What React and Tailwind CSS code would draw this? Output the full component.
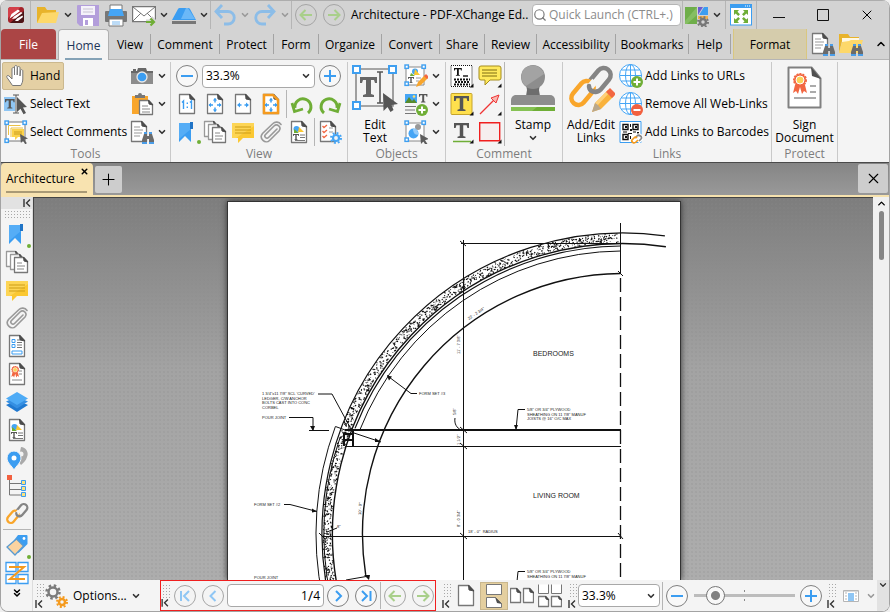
import React from 'react'
import { useState } from 'react'
import { ChevronDown, ChevronUp, ChevronsDown, X, Plus, Search } from 'lucide-react'

const Icon = ({ size = 24, box = 24, children }) => (
	<svg width={size} height={size} viewBox={`0 0 ${box} ${box}`} fill="none" className="shrink-0" aria-hidden="true">
		{children}
	</svg>
)

const Sheet = ({ x = 4, y = 2, w = 16, h = 20, fill = '#fff', stroke = '#777', fold = 5 }) => (
	<g>
		<path d={`M${x + 0.5} ${y + 0.5}h${w - fold - 1}l${fold} ${fold}v${h - fold - 1}h${-(w - 1)}z`} fill={fill} stroke={stroke} strokeWidth="1.3" strokeLinejoin="round" />
		<path d={`M${x + w - fold - 0.5} ${y}l${fold + 0.5} ${fold + 1}l${-fold} -1z`} fill="#4d4d4d" stroke="#4d4d4d" />
	</g>
)

const Binoculars = ({ x = 12, y = 12 }) => (
	<g transform={`translate(${x} ${y})`}>
		<path d="M2 2h3v2h2V2h3l2 6v3H7V7H5v4H0V8z" fill="#6b6b6b" />
		<path d="M2 0h3v2H2zM7 0h3v2H7zM0 10h5v2H0zM7 10h5v2H7z" fill="#4a9de8" />
	</g>
)

const Handles = ({ s = 20, o = 2 }) => (
	<g fill="#fff" stroke="#3f9ff0" strokeWidth="1.4">
		<rect x={o - 1} y={o - 1} width="3.4" height="3.4" />
		<rect x={o + s - 3} y={o - 1} width="3.4" height="3.4" />
		<rect x={o - 1} y={o + s - 3} width="3.4" height="3.4" />
	</g>
)

const Cursor = ({ x = 14, y = 13, k = 1 }) => (
	<path transform={`translate(${x} ${y}) scale(${k})`} d="M0 0l9 5-4 1.2 2.6 4-1.8 1.2L3.400 7.400 1 10z" fill="#5c5c5c" />
)

const Corner = () => <path d="M23.500 19.500v4h-4z" fill="#111" />

const SerifT = ({ x, y, k = 1, fill = '#555' }) => (
	<path transform={`translate(${x} ${y}) scale(${k})`} d="M0 0h12v4h-1.300l-.6-2.200H7.400v8.600l1.800.6v1H2.800v-1l1.800-.6V1.800H1.900L1.300 4H0z" fill={fill} />
)

/* ---- title bar ---- */
const AppLogo = () => (
	<Icon size={18} box={18}>
		<rect x="1" y="1" width="16" height="16" rx="3" fill="#a3232a" />
		<path d="M1 4a3 3 0 013-3h10L1 12z" fill="#d3404a" />
		<path d="M17 5v9a3 3 0 01-3 3H3z" fill="#4b1517" />
		<path d="M2.500 12.500L4.500 8 11 3.500l2 1.500-6.500 5zM5 13l2-2.500L14 6l1.500 1-7 5.500zM8 15l2-2.500 5.500-3 .5 1.500-5 4z" fill="#fff" />
	</Icon>
)
const Folder = () => (
	<Icon>
		<path d="M1 4h8l2 3h9v13H1z" fill="#e8b32b" />
		<path d="M6 10l17-1-3 11H1z" fill="#fdd86a" />
	</Icon>
)
const Save = () => (
	<Icon>
		<path d="M1 3a1 1 0 011-1h21v21H4l-3-3z" fill="#b39edb" />
		<path d="M5 3h14v9H5z" fill="#f5f2fa" />
		<path d="M7 6h10M7 9h10" stroke="#c8c3d2" />
		<path d="M7 15h10v8H7z" fill="#fff" />
		<path d="M9 17h3v5H9z" fill="#b39edb" />
	</Icon>
)
const Print = () => (
	<Icon>
		<path d="M6 2h12v8H6z" fill="#fff" stroke="#777" />
		<rect x="1" y="8" width="22" height="11" rx="1" fill="#777" />
		<path d="M4 13l2-7h12l2 7z" fill="#45a5f5" />
		<path d="M5 16h14v7H5z" fill="#fff" stroke="#777" />
		<path d="M8 19h8M8 21h8" stroke="#7ab8ee" />
	</Icon>
)
const Mail = () => (
	<Icon>
		<path d="M.600 3.600h22.800v15H.600z" fill="#fff" stroke="#777" strokeWidth="1.200" />
		<path d="M1 4l11 9L23 4M1 18l8-8M23 18l-8-8" stroke="#777" />
		<path d="M14 19h8M18.500 15l4 4-4 4" stroke="#d4d4d4" strokeWidth="5" />
		<path d="M14 19h8M18.500 15.500l3.500 3.500-3.500 3.500" stroke="#6fae36" strokeWidth="2.200" />
	</Icon>
)
const Scanner = () => (
	<Icon>
		<path d="M6 6a2 2 0 012-1h8a2 2 0 012 1l6 11H0z" fill="#3b9df1" />
		<path d="M14 5h2l7 11H9z" fill="#6bb8f8" />
		<path d="M0 18h24v3H0z" fill="#777" />
	</Icon>
)
const Undo = ({ flip }) => (
	<Icon>
		<g transform={flip ? 'translate(24 0) scale(-1 1)' : undefined} stroke="#8cbde8" strokeWidth="2.800">
			<path d="M4 8.500h11a5.500 5.500 0 010 12.500h-4" />
			<path d="M9 2L3 8.500 9 15" />
		</g>
	</Icon>
)
const UiOptions = () => (
	<Icon>
		<path d="M0 4h12v17H0z" fill="#6fae4a" />
		<path d="M0 18L12 4v8L2 21H0z" fill="#85be62" />
		<path d="M13 4h5l-5 8z" fill="#6d5bd0" />
		<path d="M19 4h4v8h-9z" fill="#3b9df1" />
		<path d="M13 13h10v3H13z" fill="#f2b04a" />
		<circle cx="18" cy="19" r="3" fill="#d3d3d3" stroke="#777" strokeWidth="2.500" />
		<circle cx="18" cy="19" r="5" stroke="#777" strokeWidth="2" strokeDasharray="1.900 2.020" />
	</Icon>
)
const FullScreen = () => (
	<Icon>
		<rect x="1.500" y="1.500" width="21" height="20.500" fill="#fff" stroke="#3b9df1" />
		<path d="M1 1h22v4H1z" fill="#3b9df1" />
		<path d="M16 3h1M18 3h1M20 3h1" stroke="#fff" />
		<path d="M5 7h5L8.500 8.700l2.500 2.500L9.200 13 6.700 10.500 5 12zM19 7h-5l1.500 1.700-2.500 2.500 1.800 1.800 2.500-2.500L19 12zM5 20h5l-1.500-1.700 2.500-2.500L9.200 14l-2.500 2.500L5 15zM19 20h-5l1.500-1.700-2.500-2.500 1.800-1.800 2.500 2.500L19 15z" fill="#6fae36" />
	</Icon>
)

/* ---- ribbon ---- */
const Hand = () => (
	<Icon>
		<path d="M8.500 21.500L3 13.500c-1-2 1-2.500 2-1.500l3 3V5c0-2 2.500-2 2.500 0v6V3c0-2 2.700-2 2.700 0v8l.3-7c0-2 2.500-2 2.500 0v8l.5-5c0-2 2.300-1.700 2.300 0v8c0 3-1 4.500-2 6.500z" fill="#fff" stroke="#777" />
	</Icon>
)
const SelectText = () => (
	<Icon>
		<path d="M0 5h11v14H0z" fill="#8fc6f4" />
		<SerifT x={1} y={7} k={0.8} />
		<path d="M9 3h6M12 3v18M9 21h6" stroke="#555" />
		<path d="M13 5l10 10-4 .5 3 5.500-2.500 1.300-3-5.500L13 20z" fill="#555" />
	</Icon>
)
const SelectComments = () => (
	<Icon>
		<path d="M2 2h19v19H2z" fill="#fff" stroke="#777" />
		<path d="M4.500 15V5.500h12M7 17V8h12" stroke="#ecc146" />
		<path d="M8 9h12v8h-6l-3 3v-3H8z" fill="#fcd34c" />
		<path d="M10 12h8M10 14h8" stroke="#c99d1f" />
		<Handles s={20} o={2} />
		<Cursor x={16} y={14} k={0.900} />
	</Icon>
)
const Camera = () => (
	<Icon>
		<path d="M1 7h22v13H1z" fill="#8c8c8c" />
		<path d="M1 7h22v2H1zM8 4h8l1 3H7zM3 5h3v2H3z" fill="#686868" />
		<circle cx="12" cy="13" r="5" fill="#3b9df1" stroke="#e8e8e8" strokeWidth="1.300" />
	</Icon>
)
const Paste = () => (
	<Icon>
		<path d="M2 4h16v18H2z" fill="#f9a62b" />
		<path d="M5 6V3h3a2 2 0 014 0h3v3z" fill="#777" />
		<g transform="translate(9 8)"><Sheet x={0} y={0} w={14} h={15} fold={4} /><path d="M3 6h6M3 9h8M3 12h8" stroke="#888" /></g>
	</Icon>
)
const DocFind = () => (
	<Icon>
		<Sheet x={1} y={1} w={16} h={21} />
		<path d="M4 7h6M4 10h9M4 13h8M4 16h6" stroke="#999" />
		<Binoculars x={12} y={12} />
	</Icon>
)
const FolderFind = () => (
	<Icon>
		<path d="M0 2h9l2 3h9v4H0z" fill="#e8b32b" />
		<path d="M0 9h3L0 21z" fill="#e8b32b" />
		<path d="M3 6h17v4H3z" fill="#fff8e2" />
		<path d="M3 10l7-1 2-1h12l-4 13H0z" fill="#fdd86a" />
		<Binoculars x={12} y={12} />
	</Icon>
)
const OneToOne = () => (
	<Icon>
		<Sheet />
		<path d="M7 10.500L8.500 9v8M15 10.500L16.500 9v8M12.300 10.500v1.500M12.300 14.500v1.500" stroke="#3b9df1" strokeWidth="1.400" />
	</Icon>
)
const FitPage = ({ active }) => (
	<Icon>
		<Sheet />
		{active && <path d="M5 3h9l5 5v13H5z" stroke="#f49a1e" strokeWidth="2.500" />}
		<path d="M12 6.500v4M12 15.500v4M6 13h4M14 13h4" stroke="#3b9df1" strokeWidth="1.500" />
		<path d="M9.800 8.500L12 6l2.200 2.500zM9.800 17.500L12 20l2.200-2.500zM8 10.800L5.500 13 8 15.200zM16 10.800l2.500 2.200-2.500 2.200z" fill="#3b9df1" />
	</Icon>
)
const FitWidth = () => (
	<Icon>
		<Sheet />
		<path d="M7 13h3.500M13.500 13H17" stroke="#3b9df1" strokeWidth="1.500" />
		<path d="M9 10.500L6 13l3 2.500zM15 10.500l3 2.500-3 2.500z" fill="#3b9df1" />
	</Icon>
)
const Rotate = ({ flip }) => (
	<Icon>
		<g transform={flip ? 'translate(24 0) scale(-1 1)' : undefined}>
			<path d="M5 16a8 8 0 1113 5" stroke="#6fae36" strokeWidth="3" />
			<path d="M2 11l2.500 8.500L13 17" stroke="#6fae36" strokeWidth="2.800" />
		</g>
	</Icon>
)
const Bookmark = () => (
	<Icon>
		<path d="M4 3h12v19l-6-6-6 6z" fill="#3b9df1" />
		<path d="M4 3h12v6L4 19z" fill="#55adf6" />
		<path d="M15 2h3v7h-3z" fill="#2074c6" />
	</Icon>
)
const Pages = () => (
	<Icon>
		<Sheet x={1} y={1} w={13} h={16} stroke="#999" fold={3} />
		<Sheet x={5} y={4} w={13} h={16} stroke="#999" fold={3} />
		<Sheet x={9} y={7} w={14} h={16} fold={4} />
		<path d="M12 13h5M12 16h8M12 19h7" stroke="#888" />
	</Icon>
)
const Comment = () => (
	<Icon>
		<path d="M1 3h22v15H12l-5 5v-5H1z" fill="#fbc832" />
		<path d="M1 3h22v3L5 18H1z" fill="#fdd555" />
		<path d="M4 7h16M4 10h16M4 13h16" stroke="#cd9d17" />
	</Icon>
)
const Clip = () => (
	<Icon>
		<path d="M18 9l-8.500 8.500c-2 2-5-1-3-3L15 6c3-3 8 1 5 5l-9.500 9.500c-4 4-11-2-7-7L14 3.500c2-2 6-2 8 1" stroke="#999" strokeWidth="1.600" strokeLinecap="round" />
	</Icon>
)
const Content = () => (
	<Icon>
		<Sheet y={1} h={22} />
		<circle cx="9.500" cy="9" r="3" fill="#45a5f5" />
		<path d="M12 7l5 5h-6z" fill="#fbc832" /><path d="M7 9l5 4H7z" fill="#6fae36" />
		<SerifT x={6} y={14} k={0.500} />
		<path d="M13 15h5M13 17.500h5M8 20.500h10" stroke="#777" />
	</Icon>
)
const PageOptions = () => (
	<Icon>
		<Sheet x={2} y={1} w={16} h={21} />
		<path d="M4.500 6l1.500 1.500L9 5M4.500 11L6 12.500 9 10M4.500 16L6 17.500 9 15" stroke="#f26742" strokeWidth="1.300" />
		<path d="M11 8h4M11 12h4" stroke="#999" />
		<circle cx="18" cy="18" r="3" fill="#f4f4f4" stroke="#45a5f5" strokeWidth="2.200" />
		<circle cx="18" cy="18" r="5" stroke="#45a5f5" strokeWidth="2" strokeDasharray="1.900 2.020" />
	</Icon>
)
const EditText = () => (
	<Icon size={48} box={48}>
		<path d="M5 5h37v37H5z" stroke="#8a8a8a" strokeWidth="1.600" />
		<g fill="#fff" stroke="#3f9ff0" strokeWidth="2"><path d="M2 2h7v7H2zM38 2h7v7h-7zM2 38h7v7H2z" /></g>
		<path d="M9 13h17v6h-2l-1-3h-3v14l3 1v2H12v-2l3-1V16h-3l-1 3H9z" fill="#666" />
		<path d="M26 8h6M29 8v31M26 39h6" stroke="#555" strokeWidth="1.600" />
		<path d="M32 29l15 11-6.500 1 2 5-3 2-3-5-4 4z" fill="#555" />
	</Icon>
)
const EditContent = () => (
	<Icon>
		<path d="M2 3h18v18H2z" fill="#fff" stroke="#888" />
		<circle cx="11" cy="7.500" r="3" fill="#45a5f5" /><path d="M11 5l5 6h-6z" fill="#fbc832" /><path d="M7 9l4 3H6z" fill="#6fae36" />
		<SerifT x={4} y={13} k={0.500} /><path d="M12 14h5M12 17h3" stroke="#999" />
		<Handles s={19} o={2} />
		<path d="M12 23l2-5 7-7 3 3-7 7z" fill="#f8a52c" /><path d="M20 12l2-2 3 3-2 2z" fill="#f26742" />
	</Icon>
)
const AddContent = () => (
	<Icon>
		<path d="M1 2h12v9H1z" fill="#45a5f5" /><path d="M1 11l4-6 3 4 2-2 3 4z" fill="#568b2c" /><circle cx="10" cy="4.500" r="1.300" fill="#ffe06b" />
		<SerifT x={15} y={2} k={0.700} />
		<path d="M1 14.500h11M1 18h10M1 21.500h11" stroke="#777" />
		<circle cx="18" cy="18" r="6" fill="#6fae36" />
		<path d="M18 14.500v7M14.500 18h7" stroke="#fff" strokeWidth="2" />
	</Icon>
)
const EditShapes = () => (
	<Icon>
		<path d="M2 3h18v18H2z" fill="#fff" stroke="#888" />
		<circle cx="14" cy="7" r="3" fill="#999" />
		<circle cx="9.500" cy="13.500" r="5" fill="#45a5f5" /><path d="M9 8.500a5 5 0 015 6c-3 1-5-2-5-6z" fill="#94cbfa" />
		<Handles s={19} o={2} />
		<Cursor x={16} y={14} />
	</Icon>
)
const Typewriter = () => (
	<Icon>
		<path d="M1 1.500h21v21H1z" fill="#fff" stroke="#111" strokeDasharray="1 1" />
		<SerifT x={4} y={4} k={0.650} fill="#111" />
		<path d="M13 12h5" stroke="#111" strokeWidth="1.400" />
		<path d="M4 15.500h16M5 18h14M4 20.500h16" stroke="#111" strokeWidth="1.800" strokeDasharray="2 1" />
		<Corner />
	</Icon>
)
const Sticky = () => (
	<Icon>
		<path d="M3 2h18a2 2 0 012 2v10a2 2 0 01-2 2H12l-5 5v-5H3a2 2 0 01-2-2V4a2 2 0 012-2z" fill="#ffe95c" stroke="#a58d1e" />
		<path d="M4 6h15M4 9h15M4 12h15" stroke="#7f6d13" />
		<Corner />
	</Icon>
)
const Highlight = () => (
	<Icon>
		<rect x="1" y="1.500" width="21" height="21" rx="1" fill="#ffe04d" stroke="#c5a42c" />
		<SerifT x={4} y={4} k={1.250} />
		<Corner />
	</Icon>
)
const Arrow = () => (
	<Icon>
		<path d="M2 22L20 4" stroke="#ef3434" strokeWidth="1.300" />
		<path d="M21 3l-3 8-5-5z" fill="#f8b6b0" stroke="#ef3434" />
		<Corner />
	</Icon>
)
const Underline = () => (
	<Icon>
		<SerifT x={4} y={3} k={1.250} />
		<path d="M3 21.500h18" stroke="#6fae36" strokeWidth="1.500" />
		<Corner />
	</Icon>
)
const Rectangle = () => (
	<Icon>
		<path d="M1.700 2.700h20v18h-20z" fill="#f6eeee" stroke="#f01f1f" strokeWidth="1.400" />
		<Corner />
	</Icon>
)
const Stamp = () => (
	<Icon size={48} box={48}>
		<path d="M17 20h14l-1 6 1 6H17l1-6z" fill="#6d6d6d" />
		<circle cx="24" cy="13" r="12" fill="#8d8d8d" />
		<path d="M15 5a12 12 0 0120 5L17 22a12 12 0 01-2-17z" fill="#a3a3a3" />
		<path d="M2 41v-5a5 5 0 015-5h34a5 5 0 015 5v5z" fill="#8d8d8d" />
		<path d="M2 43h44v4H2z" fill="#6fae36" /><path d="M2 43h26l-5 4H2z" fill="#86c254" />
	</Icon>
)
const ChainShape = () => (
	<g strokeWidth="4.500">
		<rect x="19" y="9" width="27" height="14" rx="7" stroke="#858585" transform="rotate(-50 32.500 16)" />
		<path d="M16 24l7-8" stroke="#f4f4f4" strokeWidth="9" />
		<rect x="2" y="22" width="27" height="14" rx="7" stroke="#f9a62b" transform="rotate(-50 15.500 29)" />
		<path d="M23 23l5-6" stroke="#f4f4f4" strokeWidth="7" />
		<path d="M22 22c0 5 5 7 9 5" stroke="#858585" strokeLinecap="round" />
	</g>
)
const LinkBig = () => (
	<Icon size={48} box={48}>
		<ChainShape />
		<path d="M25 48l3-9 13-13 6 6-13 13z" fill="#f9b23c" />
		<path d="M28 39l13-13 2 2-13 14z" fill="#fdd07a" />
		<path d="M25 48l3-9 3 2 3 4z" fill="#b9a88d" />
		<path d="M39 28l4-4 6 6-4 4z" fill="#f26742" />
	</Icon>
)
const Link = () => <Icon box={47}><ChainShape /></Icon>
const Globe = ({ minus }) => (
	<Icon>
		<g stroke="#45a5f5">
			<circle cx="11.500" cy="11.500" r="11" fill="#fff" />
			<ellipse cx="11.500" cy="11.500" rx="5" ry="11" />
			<path d="M11.500 1v22M1 11.500h22M2.500 6h18M2.500 17h18" />
		</g>
		<circle cx="18" cy="18" r="6" fill={minus ? '#f2603f' : '#6fae36'} />
		<path d={minus ? 'M14.500 18h7' : 'M14.500 18h7M18 14.500v7'} stroke="#fff" strokeWidth="2" />
	</Icon>
)
const Barcode = () => (
	<Icon>
		<path d="M1 1.500h21v21H1z" fill="#fff" stroke="#3b9df1" />
		<path d="M4 4.500h5v5H4zM14 4.500h5v5h-5zM4 14.500h5v5H4z" stroke="#111" strokeWidth="1.400" />
		<path d="M6 6h2v2H6zM16 6h2v2h-2zM6 16h2v2H6zM11 4h1v3h-1zM11 9h2v2h-2zM4 11.500h4v1H4zM14 11.500h3v1h-3zM18 12h2v2h-2zM9 13h4v1H9zM11 16h1v3h-1z" fill="#111" />
		<path d="M14 20l4-4c2-2 6 1 4 3l-3 3" stroke="#fff" strokeWidth="4" />
		<path d="M16 18l2-2c2-2 6 1 4 3l-2 2" stroke="#888" strokeWidth="1.700" />
		<path d="M18 18c-1-1-2-1-3 0l-2 2c-1 2 2 4 4 2l2-2" stroke="#f49a1e" strokeWidth="1.700" />
	</Icon>
)
const Seal = () => (
	<g>
		<path d="M9 21l-2 8 3-2 2 3 2-7 2 7 2-3 3 2-2-8z" fill="#f26742" />
		<circle cx="14" cy="16" r="6" fill="#f26742" stroke="#f26742" strokeWidth="2" strokeDasharray="2 1" />
		<circle cx="14" cy="16" r="4" fill="#fbd25a" stroke="#fff" />
	</g>
)
const Sign = () => (
	<Icon size={48} box={48}>
		<path d="M7.500 3.500h23l9 11v29h-32z" fill="#fff" stroke="#808080" strokeWidth="2" strokeLinejoin="round" />
		<path d="M30 3l10 12-9-3z" fill="#505050" />
		<g transform="translate(5 0)"><Seal /></g>
		<path d="M29 22h6M29 28h6M13 34h22" stroke="#909090" strokeWidth="1.500" />
	</Icon>
)

/* ---- side bar ---- */
const Fields = () => (
	<Icon>
		<Sheet y={1} h={22} />
		<path d="M7 5.500h3v3H7zM7 10.500h3v3H7zM7 17h10v3H7z" stroke="#3b9df1" />
		<path d="M12 6h3M12 8.500h5M12 11h5M12 13.500h5" stroke="#777" />
	</Icon>
)
const Certificate = () => (
	<Icon>
		<Sheet y={1} h={22} />
		<g transform="translate(2.500 -1) scale(.55)"><Seal /></g>
		<path d="M14 9h3M14 12h3M7 18h10" stroke="#888" />
	</Icon>
)
const Layers = () => (
	<Icon>
		<path d="M1 15l11 7 11-7-11-5z" fill="#2079d0" /><path d="M1 11.500l11 7 11-7-11-5z" fill="#358fe2" /><path d="M1 8.500l11 6.500 11-6.500L12 2z" fill="#4eabf6" />
	</Icon>
)
const Places = () => (
	<Icon>
		<path d="M16 1a7 7 0 016 10c-1 4-4 6-6 8l-3-4" fill="#aaa" /><circle cx="16" cy="8" r="2.500" fill="#f3f3f3" />
		<path d="M9 5a7 7 0 017 7c0 5-5 8-7 12-2-4-7-7-7-12a7 7 0 017-7z" fill="#3b9df1" stroke="#f3f3f3" /><circle cx="9" cy="12" r="2.500" fill="#fff" />
	</Icon>
)
const Tree = () => (
	<Icon>
		<path d="M4.500 4v17H17M4.500 9.500H17M4.500 15.500H17" stroke="#777" />
		<path d="M2 1h5v5H2z" fill="#f2603f" />
		<path d="M16.500 6.500h4v4h-4zM16.500 12.500h4v4h-4zM16.500 18.500h4v4h-4z" fill="#fde27a" stroke="#3b9df1" />
	</Icon>
)
const Tag = () => (
	<Icon>
		<path d="M13 2h8.500a1 1 0 011 1v8l-9 9-8-8z" fill="#3b9df1" />
		<path d="M11.500 6l7 7-8.500 9-8-8z" fill="#fbd3a0" stroke="#5a9bd0" strokeWidth="1.300" />
		<circle cx="19" cy="5.500" r="1.400" fill="#fff" />
	</Icon>
)
const Order = () => (
	<Icon>
		<path d="M1 1.500h10v9H1zM13 1.500h10v9H13zM1 13.500h10v9H1zM13 13.500h10v9H13z" fill="#fff" stroke="#3b9df1" strokeWidth="1.300" />
		<path d="M4 6h15L5 18h15" stroke="#f49a1e" strokeWidth="2" />
	</Icon>
)
const Gears = () => (
	<Icon>
		<circle cx="8" cy="8" r="4.500" stroke="#7b7b7b" strokeWidth="2.500" /><circle cx="8" cy="8" r="6.500" stroke="#7b7b7b" strokeWidth="2.500" strokeDasharray="2.500 2.600" />
		<circle cx="17" cy="18" r="3" stroke="#f49a1e" strokeWidth="2.500" /><circle cx="17" cy="18" r="5" stroke="#f49a1e" strokeWidth="2" strokeDasharray="2 1.930" />
	</Icon>
)
const TwoUp = () => (
	<Icon><Sheet x={0} y={4} w={11} h={15} fold={4} /><Sheet x={13} y={4} w={11} h={15} fold={4} /></Icon>
)
const Continuous = () => (
	<Icon>
		<path d="M4.500.500v10h15v-10z" fill="#fff" stroke="#777" />
		<path d="M4.500 23.500v-10h9l6 6v4z" fill="#fff" stroke="#777" />
		<path d="M13 13l7 7-5-1z" fill="#4d4d4d" />
	</Icon>
)
const TwoUpContinuous = () => (
	<Icon>
		<path d="M.500.500v9h10v-9M13.500.500v9h10v-9" fill="#fff" stroke="#777" />
		<Sheet x={0} y={12} w={11} h={11} fold={3} /><Sheet x={13} y={12} w={11} h={11} fold={3} />
	</Icon>
)
const PanelView = () => (
	<Icon size={16} box={16}>
		<path d="M.500 2.500h15v11H.500z" fill="#fff" stroke="#b5b5b5" /><path d="M5 5h6v8H5z" fill="#8fc6f4" /><path d="M2 5h2M2 8h2M2 11h2M12 5h2M12 8h2M12 11h2M1 3h14" stroke="#b5b5b5" />
	</Icon>
)
const DockMark = () => (
	<svg width="8" height="8" viewBox="0 0 8 8" fill="none" aria-hidden="true"><path d="M1 0v8M7 .500L3.500 4 7 7.500" stroke="#333" strokeWidth="1.400" /></svg>
)

const Tool = ({ label, className = 'w-7 h-7', children }) => (
	<button type="button" aria-label={label} className={`${className} flex items-center justify-center shrink-0`}>{children}</button>
)
const Chevron = ({ label, faded }) => (
	<button type="button" aria-label={label} className={`w-3 h-7 flex items-center justify-center shrink-0 ${faded ? 'text-[#9a9a9a]' : 'text-[#333]'}`}>
		<ChevronDown size={10} strokeWidth={4} />
	</button>
)
const Rule = ({ className = 'h-7' }) => <div className={`w-px bg-[#b5b5b5] shrink-0 ${className}`} />

const Round = ({ label, color = '#3b9df1', ring = '#808080', path }) => (
	<Tool label={label}>
		<Icon>
			<circle cx="12" cy="12" r="10.500" fill={ring === '#a5a5a5' ? 'none' : '#f8f8f8'} stroke={ring} />
			<path d={path} stroke={color} strokeWidth="2" />
		</Icon>
	</Tool>
)
const LEFT_ARROW = 'M18 12H7M11.500 7L6.500 12l5 5'
const RIGHT_ARROW = 'M6 12h11M12.500 7l5 5-5 5'

const ZoomSelect = ({ label, className }) => (
	<div className={`relative ${className}`}>
		<select aria-label={label} className="appearance-none w-full h-full bg-white border border-[#a8a8a8] rounded-sm pl-[3px] text-xs">
			<option>33.3%</option>
			<option>50%</option>
			<option>100%</option>
		</select>
		<ChevronDown size={10} strokeWidth={4} className="absolute right-1 top-1/2 -translate-y-1/2 text-[#333] pointer-events-none" />
	</div>
)

const TitleBar = () => (
	<header className="flex items-center h-[29px] bg-[#d3d3d3] border-t border-[#adadad]">
		<div className="w-[29px] flex justify-center shrink-0"><AppLogo /></div>
		<Rule />
		<div className="w-[3px] shrink-0" />
		<Tool label="Open"><Folder /></Tool>
		<Chevron label="Recent files" />
		<Tool label="Save"><Save /></Tool>
		<Tool label="Print"><Print /></Tool>
		<Tool label="Send by email"><Mail /></Tool>
		<Chevron label="Email options" />
		<Tool label="Scan"><Scanner /></Tool>
		<Chevron label="Scan options" />
		<Rule />
		<Tool label="Undo"><Undo /></Tool>
		<Chevron label="Undo history" faded />
		<Tool label="Redo"><Undo flip /></Tool>
		<Chevron label="Redo history" faded />
		<Rule />
		<Round label="Previous view" path={LEFT_ARROW} color="#a9cf8a" ring="#a5a5a5" />
		<Round label="Next view" path={RIGHT_ARROW} color="#a9cf8a" ring="#a5a5a5" />
		<h1 className="flex-1 min-w-0 overflow-hidden pl-[3px] whitespace-nowrap">Architecture - PDF-XChange Ed..</h1>
		<label className="flex items-center gap-0.5 w-[149px] h-[22px] shrink-0 bg-white border border-[#b5b5b5] rounded-sm mr-px">
			<Search size={14} className="text-[#777] shrink-0" />
			<input type="text" aria-label="Quick Launch" placeholder="Quick Launch (CTRL+.)" className="w-full min-w-0 outline-none placeholder:text-[#8b8b8b]" />
		</label>
		<Rule />
		<Tool label="UI options"><UiOptions /></Tool>
		<Chevron label="UI options menu" />
		<div className="w-0.5 shrink-0" />
		<Rule />
		<Tool label="Full screen" className="w-[30px] h-7"><FullScreen /></Tool>
		<Rule />
		<Tool label="Minimize" className="w-11 h-7"><Icon size={14} box={14}><path d="M1 9.500h12" stroke="#111" /></Icon></Tool>
		<Tool label="Maximize" className="w-11 h-7"><Icon size={14} box={14}><path d="M1.500 1.500h11v11h-11z" stroke="#111" /></Icon></Tool>
		<Tool label="Close" className="w-11 h-7"><X size={16} strokeWidth={1.5} /></Tool>
	</header>
)

const tabs = [
	{ name: 'View', width: 'w-[41px]' },
	{ name: 'Comment', width: 'w-[69px]' },
	{ name: 'Protect', width: 'w-[54px]' },
	{ name: 'Form', width: 'w-[45px]' },
	{ name: 'Organize', width: 'w-[63px]' },
	{ name: 'Convert', width: 'w-[58px]' },
	{ name: 'Share', width: 'w-[45px]' },
	{ name: 'Review', width: 'w-[52px]' },
	{ name: 'Accessibility', width: 'w-[79px]' },
	{ name: 'Bookmarks', width: 'w-[73px]' },
	{ name: 'Help', width: 'w-[42px]' },
]

const RibbonTabs = () => (
	<nav className="flex items-center h-[31px] bg-[#d3d3d3] border-b border-[#b5b5b5]">
		<button type="button" className="w-[55px] h-[30px] pt-0.5 shrink-0 rounded-t-sm bg-[#ab4545] text-white">File</button>
		<button type="button" className="relative w-[51px] h-[31px] pt-0.5 ml-0.5 mr-px shrink-0 rounded-t-sm bg-[#f4f4f4] text-[#1d3557] border border-b-0 border-[#b0b0b0]">
			Home
			<span className="absolute left-1.5 right-1.5 bottom-0 h-0.5 bg-[#84a2b6]" />
		</button>
		{tabs.map((tab) => (
			<button key={tab.name} type="button" className={`${tab.width} h-5 pt-0.5 shrink-0 border-r border-[#a3a3a3] whitespace-nowrap flex items-center justify-center`}>{tab.name}</button>
		))}
		<button type="button" className="w-[74px] h-[30px] pt-0.5 ml-0.5 shrink-0 bg-[#d5ccac] border-x border-[#d9c77f]">Format</button>
		<Tool label="Find in document" className="w-7 h-7 ml-0.5"><DocFind /></Tool>
		<Tool label="Search files"><FolderFind /></Tool>
		<div className="flex-1" />
		<Tool label="Collapse ribbon" className="w-4 h-7"><ChevronUp size={12} strokeWidth={3} /></Tool>
	</nav>
)

const Group = ({ title, className, children }) => (
	<section className={`${className} shrink-0 border-r border-[#c9c9c9] flex flex-col`}>
		<div className="flex h-[84px]">{children}</div>
		<h2 className="h-4 leading-4 text-center text-[#7d7d7d]">{title}</h2>
	</section>
)

const BigTool = ({ className, icon, children }) => (
	<button type="button" className={`${className} shrink-0 flex flex-col items-center pt-0.5 leading-[13px]`}>
		{icon}
		<span className="mt-1.5">{children}</span>
	</button>
)

const Ribbon = () => (
	<div className="flex bg-[#f4f4f4] pt-0.5 h-[103px] border-b border-[#4a4a4a] whitespace-nowrap">
		<Group title="Tools" className="w-[170px]">
			<div className="flex-1 min-w-0">
				<button type="button" className="h-7 w-[62px] ml-px pl-px flex items-center gap-0.5 rounded-xs bg-[#e4d0a4] border border-[#cbb88e]"><Hand />Hand</button>
				<button type="button" className="h-7 pl-[3px] flex items-center gap-0.5"><SelectText />Select Text</button>
				<button type="button" className="h-7 pl-[3px] flex items-center gap-0.5"><SelectComments />Select Comments</button>
			</div>
			<div className="w-7 shrink-0">
				<Tool label="Snapshot"><Camera /></Tool>
				<Tool label="Paste"><Paste /></Tool>
				<Tool label="Find"><DocFind /></Tool>
			</div>
			<div className="w-3.5 shrink-0">
				<Chevron label="Snapshot options" />
				<Chevron label="Paste options" />
				<Chevron label="Find options" />
			</div>
		</Group>
		<Group title="View" className="w-[177px]">
			<div className="flex-1 pl-0.5">
				<div className="flex items-center">
					<Round label="Zoom out" path="M6 12h12" />
					<ZoomSelect label="Zoom" className="w-[113px] h-[23px] mx-px" />
					<Round label="Zoom in" path="M6 12h12M12 6v12" />
				</div>
				<div className="flex items-center">
					<Tool label="Actual size"><OneToOne /></Tool>
					<Tool label="Fit page"><FitPage /></Tool>
					<Tool label="Fit width"><FitWidth /></Tool>
					<Tool label="Fit visible"><FitPage active /></Tool>
					<Rule className="h-7 mx-px" />
					<Tool label="Rotate left"><Rotate /></Tool>
					<Tool label="Rotate right"><Rotate flip /></Tool>
				</div>
				<div className="flex items-center">
					<div className="relative">
						<Tool label="Bookmarks"><Bookmark /></Tool>
						<span className="absolute right-0 bottom-0.5 w-1 h-1 rounded-full bg-[#6fae36]" />
					</div>
					<Tool label="Thumbnails"><Pages /></Tool>
					<Tool label="Comments"><Comment /></Tool>
					<Tool label="Attachments"><Clip /></Tool>
					<Tool label="Content"><Content /></Tool>
					<Rule className="h-7 mx-px" />
					<Tool label="Page display options"><PageOptions /></Tool>
				</div>
			</div>
		</Group>
		<Group title="Objects" className="w-[98px]">
			<BigTool className="w-[54px]" icon={<EditText />}>Edit<br />Text</BigTool>
			<div className="w-7 shrink-0">
				<Tool label="Edit content"><EditContent /></Tool>
				<Tool label="Add content"><AddContent /></Tool>
				<Tool label="Edit shapes"><EditShapes /></Tool>
			</div>
			<div className="w-3 shrink-0">
				<Chevron label="Edit content options" />
				<Chevron label="Add content options" />
				<Chevron label="Edit shapes options" />
			</div>
		</Group>
		<Group title="Comment" className="w-[117px]">
			<div className="grid grid-cols-2 w-[58px] pl-0.5 shrink-0">
				<Tool label="Typewriter"><Typewriter /></Tool>
				<Tool label="Sticky note"><Sticky /></Tool>
				<Tool label="Highlight"><Highlight /></Tool>
				<Tool label="Arrow"><Arrow /></Tool>
				<Tool label="Underline"><Underline /></Tool>
				<Tool label="Rectangle"><Rectangle /></Tool>
			</div>
			<Rule className="h-[84px]" />
			<BigTool className="w-[56px]" icon={<Stamp />}>
				Stamp
				<ChevronDown size={10} strokeWidth={4} className="mx-auto mt-0.5 text-[#333]" />
			</BigTool>
		</Group>
		<Group title="Links" className="w-[209px]">
			<BigTool className="w-[56px]" icon={<LinkBig />}>Add/Edit<br />Links</BigTool>
			<div>
				<button type="button" className="h-7 flex items-center gap-0.5"><Globe />Add Links to URLs</button>
				<button type="button" className="h-7 flex items-center gap-0.5"><Globe minus />Remove All Web-Links</button>
				<button type="button" className="h-7 flex items-center gap-0.5"><Barcode />Add Links to Barcodes</button>
			</div>
		</Group>
		<Group title="Protect" className="w-[66px]">
			<BigTool className="w-full" icon={<Sign />}>Sign<br />Document</BigTool>
		</Group>
	</div>
)

const TabStrip = () => (
	<div className="flex items-start h-[34px] shrink-0 bg-[linear-gradient(#858585,#999)] border-b-2 border-[#f6e2ae]">
		<div className="relative w-[92px] h-[34px] shrink-0 bg-[#f8e3b0] rounded-t-sm flex items-center">
			<a href="#architecture" className="pl-[5px] pb-0.5">Architecture</a>
			<button type="button" aria-label="Close tab" className="absolute right-1 top-1"><X size={9} strokeWidth={4} /></button>
			<span className="absolute left-[5px] right-1.5 bottom-1 h-0.5 bg-[#a99a76]" />
		</div>
		<button type="button" aria-label="New tab" className="w-[27px] h-[27px] mt-[3px] ml-0.5 bg-[#cdcdcd] rounded-xs flex items-center justify-center"><Plus size={19} strokeWidth={1.3} /></button>
		<div className="flex-1" />
		<button type="button" aria-label="Close document" className="w-[30px] h-[29px] mt-px mr-px bg-[#cdcdcd] rounded-xs flex items-center justify-center"><X size={17} strokeWidth={1.5} /></button>
	</div>
)

const panes = [
	['Bookmarks', Bookmark], ['Thumbnails', Pages], ['Comments', Comment], ['Attachments', Clip],
	['Fields', Fields], ['Signatures', Certificate], ['Layers', Layers], ['Content', Content],
	['Destinations', Places], ['Model tree', Tree], ['Links', Link],
]

const Dot = () => <span className="absolute right-0 bottom-0 w-1 h-1 rounded-full bg-[#6fae36]" />
const dots = 'bg-[radial-gradient(#a8a8a8_1px,transparent_1px)] bg-[size:3px_3px]'

const SideBar = () => (
	<aside className="w-8 shrink-0 bg-[#f4f4f4] flex flex-col items-center border-r border-[#dcdcdc]">
		<div className="w-full h-3 shrink-0 bg-[#e2e2e2] flex justify-end items-center pr-px"><DockMark /></div>
		<div className={`w-[26px] h-[9px] mt-px mb-px shrink-0 ${dots}`} />
		{panes.map(([name, Pane], i) => (
			<div key={name} className="relative">
				<Tool label={name}><Pane /></Tool>
				{i === 0 && <Dot />}
			</div>
		))}
		<div className="w-7 h-px my-px bg-[#b5b5b5] shrink-0" />
		<div className="relative"><Tool label="Tags"><Tag /></Tool><Dot /></div>
		<Tool label="Order"><Order /></Tool>
		<Tool label="More panes" className="w-7 h-3"><ChevronsDown size={12} strokeWidth={3} /></Tool>
	</aside>
)

/* building plan */
const CX = 622
const CY = 534

function ringPoint(r, deg) {
	const a = (deg * Math.PI) / 180
	return [CX - r * Math.cos(a), CY - r * Math.sin(a)]
}

function arc(r, from, to) {
	const [x1, y1] = ringPoint(r, from)
	const [x2, y2] = ringPoint(r, to)
	return `M${x1.toFixed(1)} ${y1.toFixed(1)}A${r} ${r} 0 0 1 ${x2.toFixed(1)} ${y2.toFixed(1)}`
}

// concrete speckle, seeded so it stays the same on every render
function speckle(count) {
	let seed = 7
	const next = () => {
		seed = (seed * 16807) % 2147483647
		return seed / 2147483647
	}
	let d = ''
	for (let i = 0; i < count; i++) {
		const [x, y] = ringPoint(291.5 + next() * 8.5, -12 + next() * 101.5)
		d += `M${x.toFixed(1)} ${y.toFixed(1)}l${(next() * 2.6 - 1.3).toFixed(1)} ${(next() * 2.6 - 1.3).toFixed(1)}`
	}
	return d
}
const concrete = speckle(1150)

const Note = ({ x, y, lines }) => (
	<text x={x} y={y}>
		{lines.map((line, i) => <tspan key={line} x={x} dy={i ? 4.6 : 0}>{line}</tspan>)}
	</text>
)

const Plan = () => (
	<svg viewBox="227 202 452 380" preserveAspectRatio="xMidYMin slice" className="w-full h-full" role="img" aria-label="Floor section drawing">
		<g fill="none" stroke="#111" strokeWidth="1">
			<path d={arc(301, -12, 98)} strokeWidth="1.2" />
			<path d={arc(290.5, -12, 98.5)} strokeWidth="1.4" />
			<path d={arc(288, 21.5, 89.5)} strokeWidth="1.2" />
			<path d={arc(283, 21.5, 89.5)} />
			<path d={arc(307, -12, 20.5)} />
			<path d={arc(299, -12, 19)} />
			<path d={arc(260.5, -9, 89.5)} strokeWidth="1.4" />
			<path d={concrete} strokeWidth="1.2" />
			<path d="M334.5 426.500l11 4" />
			<path d="M344 430h276" strokeWidth="2" />
			<path d="M344 446.500h276M321 536.500h299M460 243.500h160M462.500 240v342" />
			<path d="M619.500 223v51" />
			<path d="M619.500 278v304" strokeDasharray="14 5" strokeWidth="1.300" />
			<path d="M342 434h10M343 440h9M343 434v12M352 430v16" strokeWidth="2" />
			<path d="M353 433l27 9M317 394h14l20 37M288 417.500h24v13M308 430.500h20" />
			<path d="M416 393.500h-6l-24-18M283 504.500h6l27 7" />
			<path d="M524 409.500h-7l-2 20M524 571.500h-7l-1 10M454 418c-1 6 2 10 6 12M326 532l10-4M345 580l23-4" />
			<path d="M459 427l7 6M459 443l7 6M459 533l7 6M617 533l5 6M318 533l6 6M459 241l6 5M617 271l5 5" />
		</g>
		<g fill="#111">
			<path d="M380 442l-6-4v4zM386 375.500l2 5 3-4zM316 511.500l-5-3v4zM312 431l-3-5h5zM515 430l-2-5h4zM368 580l-5-5h6z" />
		</g>
		<g fill="#222" fontFamily="'Liberation Sans', Arial, sans-serif" fontSize="4">
			<Note x={261} y={395} lines={['1 3/4"x11 7/8" SCL \'CURVED\'', 'LEDGER, C/W ANCHOR', 'BOLTS CAST INTO CONC', 'CORBEL']} />
			<text x="261" y="419">POUR JOINT</text>
			<text x="418" y="395">FORM SET #3</text>
			<text x="253" y="506">FORM SET #2</text>
			<text x="253" y="579">POUR JOINT</text>
			<Note x={526} y={411} lines={['5/8" OR 3/4" PLYWOOD', 'SHEATHING ON 11 7/8" MANUF', 'JOISTS @ 16" O/C MAX']} />
			<Note x={526} y={573} lines={['5/8" OR 3/4" PLYWOOD', 'SHEATHING ON 11 7/8" MANUF']} />
			<text x="467" y="533">18' - 0"&#160; RADIUS</text>
			<text x="336" y="528">8"</text>
			<text transform="translate(459 354) rotate(-90)">11' - 7 3/8"</text>
			<text transform="translate(455 415) rotate(-90)">5/8"</text>
			<text transform="translate(459 445) rotate(-90)">1 1/2"</text>
			<text transform="translate(459 527) rotate(-90)">8' - 0 3/4"</text>
			<text transform="translate(360 515) rotate(-86)">10' - 0"</text>
			<text transform="translate(468 320) rotate(-34)">22' - 2 3/4"</text>
			<text x="532" y="356" fontSize="7">BEDROOMS</text>
			<text x="532" y="498" fontSize="7">LIVING ROOM</text>
		</g>
	</svg>
)

const Canvas = () => (
	<main className="flex-1 min-w-0 min-h-0 flex justify-center overflow-hidden pt-[3px] border-t border-l border-[#444] bg-[radial-gradient(#8a8a8a33_1px,transparent_1px),linear-gradient(#7d7d7d,#a3a3a3_45%,#adadad)] bg-[size:4px_4px,100%_100%]">
		<div className="w-[454px] bg-white border border-b-0 border-[#333] shadow-[0_0_6px_#333]"><Plan /></div>
	</main>
)

const ScrollBar = () => (
	<div className="w-4 shrink-0 bg-[#f0f0f0] flex flex-col items-center">
		<Tool label="Scroll up" className="w-4 h-3"><ChevronUp size={11} strokeWidth={3} /></Tool>
		<div className="w-[5px] h-[49px] mt-0.5 rounded-full bg-[#868686]" />
	</div>
)

const Grip = () => (
	<div className="w-[10px] h-full shrink-0 flex flex-col justify-between py-[3px]">
		<div className={`w-2 h-4 ml-px ${dots}`} />
		<DockMark />
	</div>
)

const StatusBar = () => {
	const [page, setPage] = useState('1')
	const [zoom, setZoom] = useState(15)

	return (
		<footer className="flex h-[31px] shrink-0 items-center bg-[#f4f4f4]">
			<div className="w-0.5 shrink-0" />
			<Grip />
			<button type="button" className="flex items-center gap-1 w-[115px] shrink-0">
				<Gears />Options...
				<ChevronDown size={10} strokeWidth={4} className="text-[#333]" />
			</button>
			<div className="flex items-center w-[276px] h-full shrink-0 border border-[#f01f1f]">
				<Grip />
				<Round label="First page" path="M8 7v10M16 7l-5 5 5 5" color="#8fc6f4" ring="#a5a5a5" />
				<Round label="Previous page" path="M14.500 7l-5 5 5 5" color="#8fc6f4" ring="#a5a5a5" />
				<label className="flex items-center w-[97px] h-[23px] shrink-0 bg-white border border-[#a8a8a8] rounded-sm pr-[3px] text-sm">
					<input type="text" aria-label="Page" value={page} onChange={(e) => setPage(e.target.value)} className="w-full min-w-0 text-right text-xs outline-none" />
					<span>/</span>
					<span className="text-xs">4</span>
				</label>
				<Round label="Next page" path="M10 7l5 5-5 5" />
				<Round label="Last page" path="M8 7l5 5-5 5M16.500 7v10" />
				<Rule className="h-[27px]" />
				<Round label="Back" path={LEFT_ARROW} color="#a9cf8a" ring="#a5a5a5" />
				<Round label="Forward" path={RIGHT_ARROW} color="#a9cf8a" ring="#a5a5a5" />
			</div>
			<div className="w-1.5 shrink-0" />
			<Grip />
			<Tool label="Single page"><Icon><Sheet y={1} h={21} /></Icon></Tool>
			<Tool label="Continuous" className="w-7 h-7 bg-[#e4cf9f] border border-[#c9b78d]"><Continuous /></Tool>
			<Tool label="Two pages"><TwoUp /></Tool>
			<Tool label="Two pages continuous"><TwoUpContinuous /></Tool>
			<div className="w-1 shrink-0" />
			<Grip />
			<ZoomSelect label="Zoom level" className="w-[82px] h-[23px] shrink-0 mr-0.5" />
			<Rule />
			<Round label="Zoom out" path="M6 12h12" />
			<input
				type="range"
				aria-label="Zoom slider"
				min="0"
				max="100"
				value={zoom}
				onChange={(e) => setZoom(Number(e.target.value))}
				className="flex-1 min-w-0 h-5 ml-[3px] mr-0.5 appearance-none bg-[linear-gradient(#bcbcbc,#bcbcbc),linear-gradient(#8a8a8a_2px,transparent_2px_9px,#8a8a8a_9px)] bg-[size:100%_3px,1px_11px] bg-center bg-no-repeat [&::-webkit-slider-thumb]:appearance-none [&::-webkit-slider-thumb]:size-[19px] [&::-webkit-slider-thumb]:rounded-full [&::-webkit-slider-thumb]:border [&::-webkit-slider-thumb]:border-[#777] [&::-webkit-slider-thumb]:bg-[radial-gradient(#808080_0_4px,#f8f8f8_5px)]"
			/>
			<Round label="Zoom in" path="M6 12h12M12 6v12" />
			<div className="w-0.5 shrink-0" />
			<Grip />
			<Tool label="Panel view"><PanelView /></Tool>
			<Chevron label="Panel view options" faded />
			<div className="w-3 h-full shrink-0 bg-[#e2e2e2] text-[#333]"><ChevronDown size={10} strokeWidth={3} className="mx-auto" /></div>
		</footer>
	)
}

const App = () => {
	return (
		<div className="h-screen bg-[#f0f0f0] text-xs text-black font-['Open_Sans','Noto_Sans',sans-serif]">
			<div className="h-full flex flex-col overflow-hidden rounded-lg border-x border-b border-[#a3a3a3]">
				<TitleBar />
				<RibbonTabs />
				<Ribbon />
				<TabStrip />
				<div className="flex-1 min-h-0 flex">
					<SideBar />
					<div className="flex-1 min-w-0 flex flex-col">
						<div className="flex-1 min-h-0 flex">
							<Canvas />
							<ScrollBar />
						</div>
						<StatusBar />
					</div>
				</div>
			</div>
		</div>
	)
}

export default App
